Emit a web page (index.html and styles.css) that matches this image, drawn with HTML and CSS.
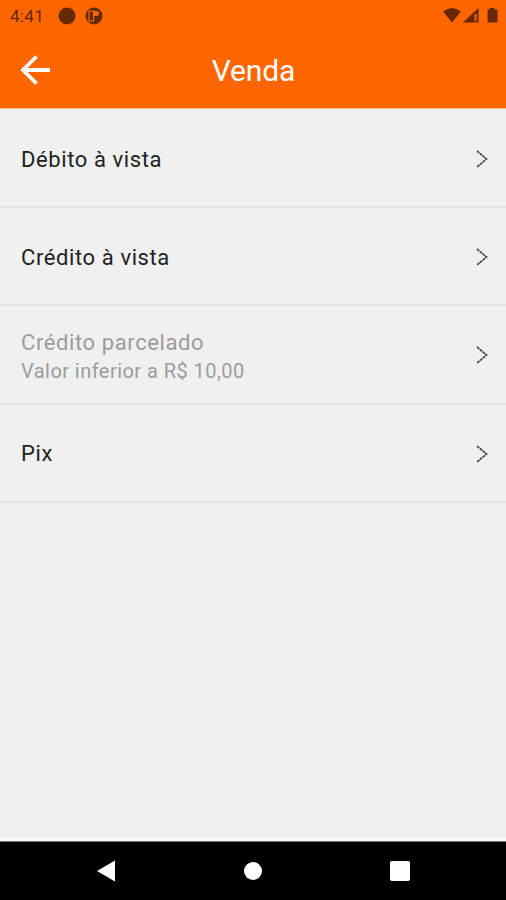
FILE: index.html
```html
<!DOCTYPE html>
<html lang="pt-BR">
<head>
<meta charset="utf-8">
<title>Venda</title>
<link rel="stylesheet" href="styles.css">
</head>
<body>
<header class="top">
  <div class="status">
    <span class="time">4:41</span>
    <svg class="notices" width="48" height="18" viewBox="0 0 48 18"><circle cx="9" cy="9" r="8.5"/><circle cx="36" cy="9" r="8.5"/><path class="cut" d="M31 4H35.500V14H31Z"/><path class="cut-fill" d="M36 4H38.500Q41 4 41 6.500T38.500 9H36Z"/></svg>
    <svg class="signals" width="56" height="18" viewBox="0 0 56 18"><path d="M0 4.500Q9 -2.500 18 4.500L9 15.500Z"/><path d="M20 15.500L35.500 1V15.500Z"/><path class="gap" d="M32.500 7V14"/><path d="M46.500 1H51.500V2.500H54.500V15.500H44.500V2.500H46.500Z"/></svg>
  </div>
  <div class="bar">
    <svg class="back" width="32" height="32" viewBox="0 0 32 32"><path d="M30 16H3.500M16.500 2.500L3 16L16.500 29.500"/></svg>
    <h1>Venda</h1>
  </div>
</header>
<main>
  <div class="row"><div class="label">Débito à vista</div><svg class="chevron" width="12" height="18" viewBox="0 0 12 18"><path d="M1 1L10.500 9L1 17"/></svg></div>
  <div class="row"><div class="label">Crédito à vista</div><svg class="chevron" width="12" height="18" viewBox="0 0 12 18"><path d="M1 1L10.500 9L1 17"/></svg></div>
  <div class="row disabled"><div class="lines"><div class="label">Crédito parcelado</div><div class="note">Valor inferior a R$ 10,00</div></div><svg class="chevron" width="12" height="18" viewBox="0 0 12 18"><path d="M1 1L10.500 9L1 17"/></svg></div>
  <div class="row"><div class="label">Pix</div><svg class="chevron" width="12" height="18" viewBox="0 0 12 18"><path d="M1 1L10.500 9L1 17"/></svg></div>
</main>
<nav>
  <svg width="18" height="22" viewBox="0 0 18 22"><path d="M0 11L18 0.500V21.500Z"/></svg>
  <svg width="18" height="18" viewBox="0 0 18 18"><circle cx="9" cy="9" r="9"/></svg>
  <svg width="20" height="20" viewBox="0 0 20 20"><rect width="20" height="20" rx="2"/></svg>
</nav>
</body>
</html>
```
FILE: styles.css
```css
* { box-sizing: border-box; }
body {
  margin: 0;
  height: 900px;
  display: flex;
  flex-direction: column;
  background: #f0f0f0;
  font-family: Roboto, "Liberation Sans", sans-serif;
}
svg { display: block; flex: none; }
.top {
  height: 109px;
  background: #ff6600;
  border-bottom: 1px solid #ffb98d;
}
.status {
  height: 32px;
  padding: 0 9px 0 10px;
  display: flex;
  align-items: center;
  color: #662900;
  fill: #662900;
}
.time { width: 48px; font-size: 17px; letter-spacing: 0.3px; }
.cut { fill: none; stroke: #ff6600; stroke-width: 1.2; }
.cut-fill { fill: #ff6600; }
.gap { stroke: #ff6600; stroke-width: 2; }
.signals { margin-left: auto; margin-right: -2px; }
.bar {
  height: 76px;
  padding: 0 20px;
  display: grid;
  grid-template-columns: 32px 1fr 32px;
  align-items: center;
}
.back { fill: none; stroke: #fff; stroke-width: 3.8; }
h1 {
  margin: 2px 0 0 1px;
  color: #fff;
  font-size: 30px;
  font-weight: 400;
  line-height: 36px;
  letter-spacing: -0.1px;
  text-align: center;
}
main { flex: 1; padding-top: 1px; border-bottom: 3px solid #f8f8f8; }
.row {
  height: 98.2px;
  padding: 2px 18px 0 21px;
  display: flex;
  align-items: center;
  justify-content: space-between;
  border-bottom: 2px solid #e3e3e3;
}
.label { padding-top: 1px; color: #222; font-size: 22px; line-height: 28px; letter-spacing: 0.6px; }
.note { font-size: 20px; line-height: 28px; letter-spacing: 0.45px; }
.lines { padding-top: 2px; }
.disabled, .disabled .label { color: #9c9c9c; }
.chevron { fill: none; stroke: #444; stroke-width: 1.7; stroke-dasharray: 3 0.6; }
nav {
  height: 59px;
  padding: 0 96px 0 97px;
  border-top: 1px solid #777;
  display: flex;
  align-items: center;
  justify-content: space-between;
  background: #000;
  fill: #fff;
}
```
